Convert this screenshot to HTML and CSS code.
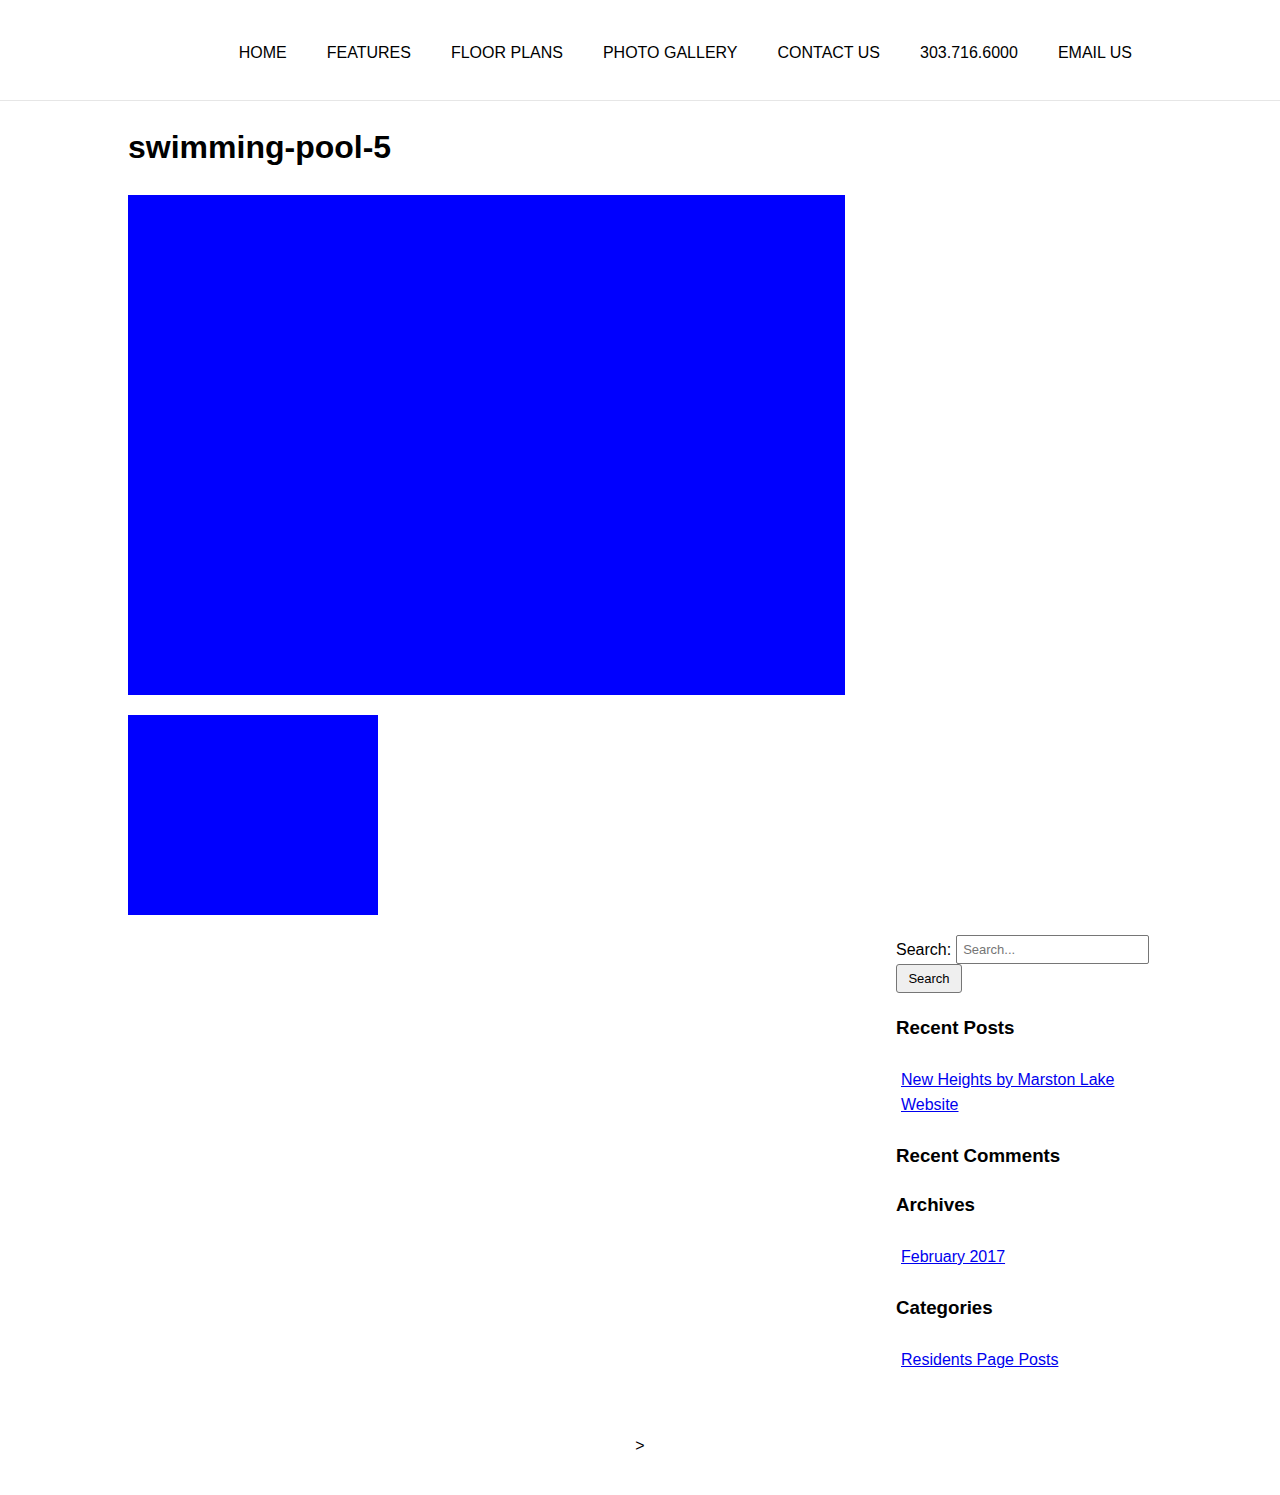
FILE: index.html
```html
<!DOCTYPE html>
<html lang="en">
<head>
<meta charset="utf-8">
<title>swimming-pool-5</title>
<link rel="stylesheet" href="styles.css">
</head>
<body>
<header class="site-header">
  <nav class="main-nav">
    <a href="#">HOME</a>
    <a href="#">FEATURES</a>
    <a href="#">FLOOR PLANS</a>
    <a href="#">PHOTO GALLERY</a>
    <a href="#">CONTACT US</a>
    <a href="#">303.716.6000</a>
    <a href="#">EMAIL US</a>
  </nav>
</header>
<div class="page">
  <main class="content">
    <h1 class="title">swimming-pool-5</h1>
    <div class="photo-large"></div>
    <div class="photo-thumb"></div>
  </main>
  <aside class="sidebar">
    <form class="search">
      <div class="search-row">
        <label class="search-label" for="s">Search:</label>
        <input class="search-input" id="s" type="text" placeholder="Search...">
      </div>
      <button class="search-btn" type="button">Search</button>
    </form>
    <section class="widget">
      <h3 class="widget-title">Recent Posts</h3>
      <ul class="widget-list">
        <li><a href="#">New Heights by Marston Lake Website</a></li>
      </ul>
    </section>
    <section class="widget widget-empty">
      <h3 class="widget-title">Recent Comments</h3>
    </section>
    <section class="widget">
      <h3 class="widget-title">Archives</h3>
      <ul class="widget-list">
        <li><a href="#">February 2017</a></li>
      </ul>
    </section>
    <section class="widget">
      <h3 class="widget-title">Categories</h3>
      <ul class="widget-list">
        <li><a href="#">Residents Page Posts</a></li>
      </ul>
    </section>
  </aside>
</div>
<footer class="site-footer">&gt;</footer>
</body>
</html>
```

FILE: styles.css
```css
* { box-sizing: border-box; }
html, body { margin: 0; padding: 0; }
body {
  font-family: "Liberation Sans", Arial, sans-serif;
  color: #000;
  background: #fff;
  font-size: 16px;
}
.site-header {
  height: 101px;
  border-bottom: 1px solid #e6e6e6;
  padding-top: 44px;
}
.main-nav {
  width: 1024px;
  margin: 0 auto;
  display: flex;
  justify-content: flex-end;
}
.main-nav a {
  color: #000;
  text-decoration: none;
  font-size: 16px;
  line-height: 18px;
  padding: 0 20px;
}
.page {
  width: 1024px;
  margin: 0 auto;
  display: grid;
  grid-template-columns: 768px 256px;
  row-gap: 20px;
  padding-top: 28px;
}
.content {
  grid-column: 1;
  grid-row: 1;
  display: flex;
  flex-direction: column;
  gap: 20px;
}
.title {
  font-size: 32px;
  font-weight: bold;
  margin: 0 0 9px;
  line-height: 37px;
}
.photo-large {
  width: 717px;
  height: 500px;
  background: #0000ff;
}
.photo-thumb {
  width: 250px;
  height: 200px;
  background: #0000ff;
}
.sidebar {
  grid-column: 2;
  grid-row: 2;
}
.search-row {
  display: flex;
  align-items: center;
  gap: 5px;
  height: 29px;
}
.search-label { font-size: 16px; }
.search-input {
  width: 193px;
  height: 29px;
  border: 1px solid #767676;
  border-radius: 2px;
  padding: 0 6px;
  font-family: "Liberation Sans", Arial, sans-serif;
  font-size: 13px;
}
.search-input::placeholder { color: #757575; }
.search-btn {
  display: block;
  width: 66px;
  height: 29px;
  font-family: "Liberation Sans", Arial, sans-serif;
  font-size: 13px;
  background: #efefef;
  border: 1px solid #767676;
  border-radius: 3px;
  color: #000;
  padding: 0;
}
.widget { margin-top: 24px; }
.widget + .widget { margin-top: 28px; }
.widget-empty + .widget { margin-top: 27px; }
.widget-title {
  font-size: 18.72px;
  font-weight: bold;
  line-height: 22px;
  margin: 0;
}
.widget-list {
  list-style: none;
  margin: 28px 0 0;
  padding: 0 0 0 5px;
  line-height: 25px;
}
.widget-list a { color: #0000ee; }
.site-footer {
  text-align: center;
  padding-top: 65px;
  padding-bottom: 30px;
  font-size: 16px;
  line-height: 18px;
}
```
